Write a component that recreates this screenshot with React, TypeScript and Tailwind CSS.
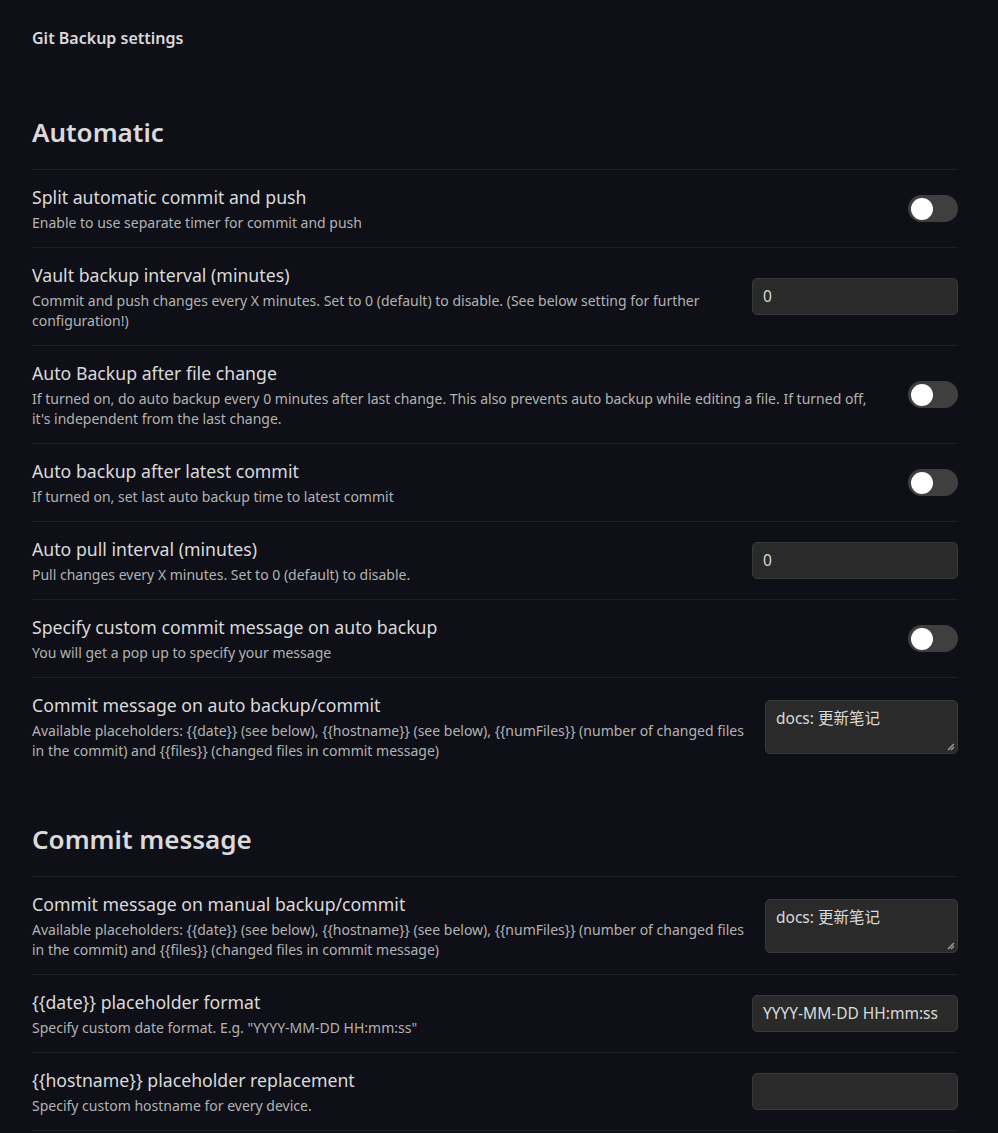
import React from "react";

const FONT = { fontFamily: '"Noto Sans", "Noto Sans CJK SC", sans-serif' };

function Toggle() {
  return (
    <div className="w-[50px] h-[27px] rounded-full bg-[#3f3f3f] flex items-center px-[3px] shrink-0">
      <div className="w-[22px] h-[22px] rounded-full bg-white" />
    </div>
  );
}

function TextInput({ value }: { value: string }) {
  return (
    <div className="w-[206px] h-[37px] rounded-[5px] bg-[#2a2a2a] border border-[#363a3b] flex items-center px-[10px] text-[15.5px] text-[#dadada] shrink-0 whitespace-nowrap overflow-hidden">
      {value}
    </div>
  );
}

function TextArea({ value }: { value: string }) {
  return (
    <div className="relative w-[193px] h-[54px] rounded-[5px] bg-[#2a2a2a] border border-[#363a3b] px-[10px] pt-[6px] text-[15.5px] text-[#dadada] shrink-0">
      {value}
      <svg className="absolute right-[2px] bottom-[2px]" width="9" height="9" viewBox="0 0 9 9">
        <path d="M8 2 L2 8 M8 5 L5 8" stroke="#9a9a9a" strokeWidth="1.5" />
      </svg>
    </div>
  );
}

function Row({
  title,
  desc,
  control,
  border = true,
}: {
  title: string;
  desc: React.ReactNode;
  control: React.ReactNode;
  border?: boolean;
}) {
  return (
    <div className={`flex items-center py-[14px] ${border ? "border-b border-[#1c2127]" : ""}`}>
      <div className="flex-1 min-w-0 pr-[10px]">
        <div className="text-[17.7px] leading-[26px] text-[#dadada]">{title}</div>
        <div className="text-[14px] leading-[20px] text-[#b3b3b3] mt-[3px]">{desc}</div>
      </div>
      {control}
    </div>
  );
}

const placeholderDesc = (
  <>
    Available placeholders: {"{{date}}"} (see below), {"{{hostname}}"} (see below), {"{{numFiles}}"} (number of changed files
    <br />
    in the commit) and {"{{files}}"} (changed files in commit message)
  </>
);

export default function App() {
  return (
    <div className="min-h-[1133px] bg-[#0f0f17] pl-[32px] pr-[40px]" style={FONT}>
      <div className="pt-[26px] text-[16px] leading-[24px] font-semibold text-[#dadada]">Git Backup settings</div>

      <div className="mt-[64px] text-[26px] leading-[36px] font-semibold text-[#dadada] pb-[19px] border-b border-[#1c2127]">
        Automatic
      </div>

      <Row
        title="Split automatic commit and push"
        desc="Enable to use separate timer for commit and push"
        control={<Toggle />}
      />
      <Row
        title="Vault backup interval (minutes)"
        desc={
          <>
            Commit and push changes every X minutes. Set to 0 (default) to disable. (See below setting for further
            <br />
            configuration!)
          </>
        }
        control={<TextInput value="0" />}
      />
      <Row
        title="Auto Backup after file change"
        desc={
          <>
            If turned on, do auto backup every 0 minutes after last change. This also prevents auto backup while editing a file. If turned off,
            <br />
            it's independent from the last change.
          </>
        }
        control={<Toggle />}
      />
      <Row
        title="Auto backup after latest commit"
        desc="If turned on, set last auto backup time to latest commit"
        control={<Toggle />}
      />
      <Row
        title="Auto pull interval (minutes)"
        desc="Pull changes every X minutes. Set to 0 (default) to disable."
        control={<TextInput value="0" />}
      />
      <Row
        title="Specify custom commit message on auto backup"
        desc="You will get a pop up to specify your message"
        control={<Toggle />}
      />
      <Row
        title="Commit message on auto backup/commit"
        desc={placeholderDesc}
        control={<TextArea value="docs: 更新笔记" />}
        border={false}
      />

      <div className="mt-[46px] text-[26px] leading-[36px] font-semibold text-[#dadada] pb-[19px] border-b border-[#1c2127]">
        Commit message
      </div>

      <Row
        title="Commit message on manual backup/commit"
        desc={placeholderDesc}
        control={<TextArea value="docs: 更新笔记" />}
      />
      <Row
        title="{{date}} placeholder format"
        desc={'Specify custom date format. E.g. "YYYY-MM-DD HH:mm:ss"'}
        control={<TextInput value="YYYY-MM-DD HH:mm:ss" />}
      />
      <Row
        title="{{hostname}} placeholder replacement"
        desc="Specify custom hostname for every device."
        control={<TextInput value="" />}
      />
    </div>
  );
}
